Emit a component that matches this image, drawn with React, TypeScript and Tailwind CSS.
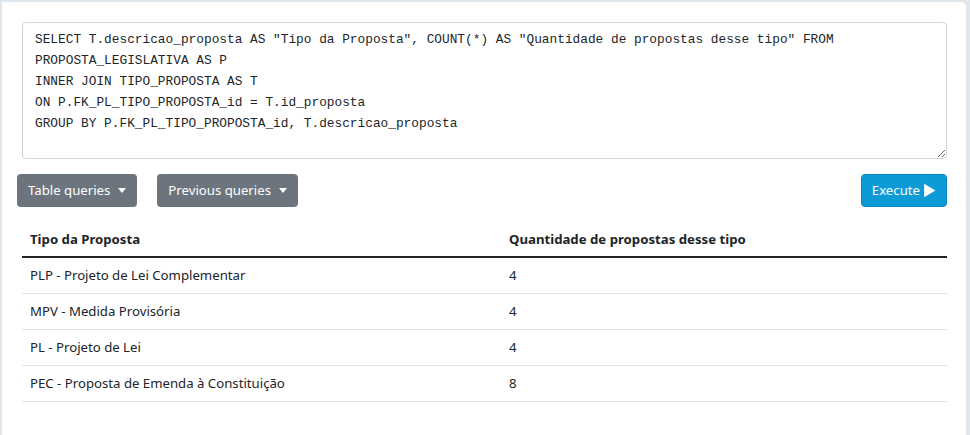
import React from 'react'

const sql = `SELECT T.descricao_proposta AS "Tipo da Proposta", COUNT(*) AS "Quantidade de propostas desse tipo" FROM
PROPOSTA_LEGISLATIVA AS P
INNER JOIN TIPO_PROPOSTA AS T
ON P.FK_PL_TIPO_PROPOSTA_id = T.id_proposta
GROUP BY P.FK_PL_TIPO_PROPOSTA_id, T.descricao_proposta`

const rows = [
  ['PLP - Projeto de Lei Complementar', '4'],
  ['MPV - Medida Provisória', '4'],
  ['PL - Projeto de Lei', '4'],
  ['PEC - Proposta de Emenda à Constituição', '8'],
]

const Caret = () => (
  <span className="ml-[8px] inline-block h-0 w-0 border-x-[4px] border-t-[5px] border-x-transparent border-t-white" />
)

const App = () => {
  return (
    <div className="min-h-screen bg-[#dfe6ec] pl-[2px] pt-[2px] font-['Noto_Sans',sans-serif] text-[#212529]">
      <div className="relative w-[964px] min-h-[433px] rounded-tr-[5px] bg-white px-[20px] pt-[20px]">
        <textarea
          defaultValue={sql}
          spellCheck={false}
          className="block h-[137px] w-[925px] rounded-[4px] border border-[#ced4da] px-[12px] py-[6px] font-['Liberation_Mono',monospace] text-[12.8px] leading-[21px] text-[#212529] outline-none"
        />

        <div className="mt-[15px] -ml-[5px] flex w-[930px] items-center">
          <button className="flex h-[33px] items-center rounded-[4px] bg-[#6c757d] px-[11px] text-[13.2px] text-white">
            Table queries
            <Caret />
          </button>
          <button className="ml-[20px] flex h-[33px] items-center rounded-[4px] bg-[#6c757d] px-[11px] text-[13.2px] text-white">
            Previous queries
            <Caret />
          </button>
          <button className="ml-auto flex h-[33px] items-center rounded-[4px] border border-[#0787c2] bg-[#0d9bd8] px-[10px] text-[13.2px] text-white">
            Execute
            <svg viewBox="0 0 12 14" className="ml-[3px] h-[15px] w-[13px]" fill="white">
              <path d="M1 0.8 L11.5 7 L1 13.2 Z" />
            </svg>
          </button>
        </div>

        <table className="mt-[15px] w-[925px] border-collapse text-[13.2px]">
          <thead>
            <tr className="border-b-2 border-[#212529]">
              <th className="w-[479px] px-[8px] pt-[7px] pb-[6px] text-left font-bold leading-[21px]">Tipo da Proposta</th>
              <th className="px-[8px] pt-[7px] pb-[6px] text-left font-bold leading-[21px]">Quantidade de propostas desse tipo</th>
            </tr>
          </thead>
          <tbody>
            {rows.map((r) => (
              <tr key={r[0]} className="border-b border-[#dee2e6]">
                <td className="px-[8px] py-[7px] leading-[21px]">{r[0]}</td>
                <td className="px-[8px] py-[7px] leading-[21px]">{r[1]}</td>
              </tr>
            ))}
          </tbody>
        </table>
      </div>
    </div>
  )
}

export default App
